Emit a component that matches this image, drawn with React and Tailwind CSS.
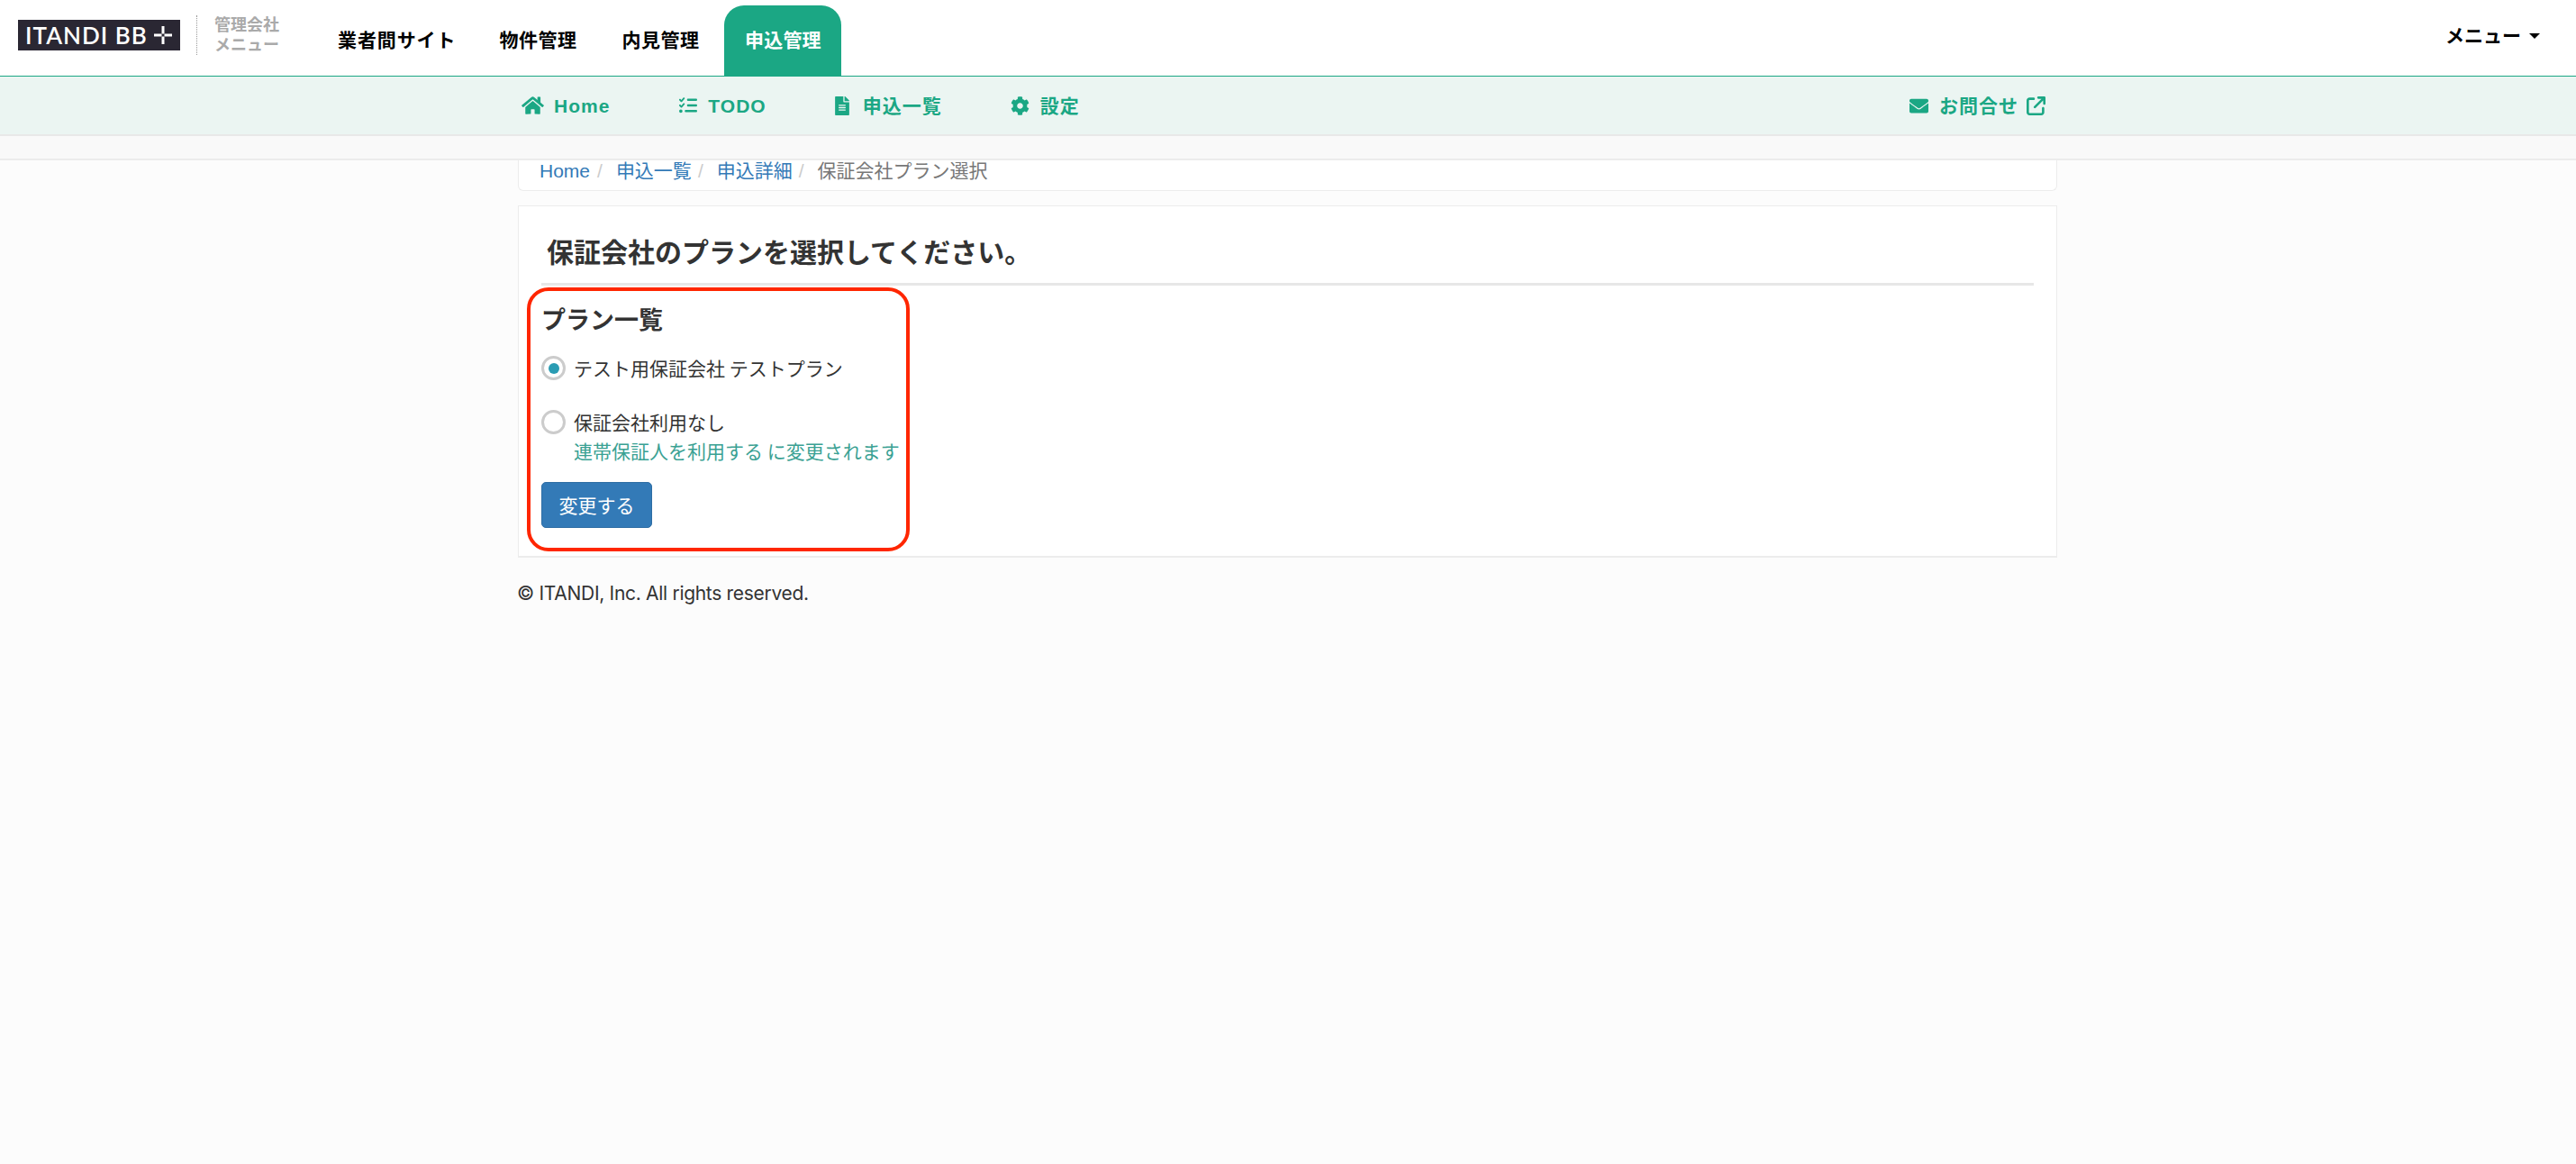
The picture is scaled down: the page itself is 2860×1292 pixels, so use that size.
import React from "react";
import { FaHome, FaFileAlt, FaCog, FaEnvelope } from "react-icons/fa";
import { FaListCheck, FaArrowUpRightFromSquare } from "react-icons/fa6";

const JP = { fontFamily: '"Noto Sans CJK JP", sans-serif' };

function TopLink({ children, className = "" }) {
  return <a className={"font-bold text-[21px] leading-none text-black " + className}>{children}</a>;
}

function SubLink({ icon, children, className = "" }) {
  return (
    <a className={"flex items-center font-bold text-[21px] leading-none text-[#1ba784] tracking-[1px] " + className}>
      {icon}
      {children}
    </a>
  );
}

export default function App() {
  return (
    <div className="min-h-[1292px] bg-[#fcfcfc] font-['Liberation_Sans','Noto_Sans_CJK_JP',sans-serif] text-[#333]">
      <header className="h-[85px] bg-white border-b-[1.5px] border-[#1ba784] flex relative">
        <div className="ml-5 mt-[22px] w-[180px] h-[34px] bg-[#2a2733] flex items-center pl-2 text-white font-['Lato',sans-serif] font-semibold text-[26px] leading-none tracking-[1px] whitespace-nowrap">
          ITANDI BB
          <svg viewBox="0 0 20 20" className="w-5 h-5 ml-[7px]" fill="white">
            <rect x="0" y="8.5" width="8.5" height="3" />
            <rect x="11.5" y="8.5" width="8.5" height="3" />
            <rect x="8.5" y="0" width="3" height="8.5" />
            <rect x="8.5" y="11.5" width="3" height="8.5" />
          </svg>
        </div>
        <div className="ml-[18px] mt-[17px] h-[44px] border-l border-dotted border-[#999]" />
        <div className="ml-[19px] mt-[17px] flex flex-col text-[18px] leading-[22px] font-bold text-[#aaa] whitespace-nowrap">
          <span>管理会社</span>
          <span>メニュー</span>
        </div>
        <nav className="ml-[65px] flex items-start">
          <TopLink className="mt-[34px] tracking-[0.9px]">業者間サイト</TopLink>
          <TopLink className="mt-[34px] ml-[48px] tracking-[0.5px]">物件管理</TopLink>
          <TopLink className="mt-[34px] ml-[50px] tracking-[0.5px]">内見管理</TopLink>
          <a className="ml-[28px] mt-[6px] h-[78px] w-[130px] rounded-t-[22px] bg-[#1ba784] flex justify-center pt-[28px] text-white font-bold text-[21px] leading-none tracking-[0.2px]">
            申込管理
          </a>
        </nav>
        <div className="ml-auto mr-[40px] mt-[29px] flex items-start font-bold text-[21px] leading-none text-black">
          メニュー
          <span className="ml-[9px] mt-[8px] border-x-[6px] border-x-transparent border-t-[6px] border-t-black" />
        </div>
      </header>

      <div className="h-[66px] bg-[#ebf5f2] border-b-2 border-[#e8e8e8]">
        <div className="w-[1709px] ml-[575px] h-full flex items-center pl-[4px]">
          <SubLink icon={<FaHome className="w-[25px] h-[22px] mr-[11px]" />}>Home</SubLink>
          <SubLink className="ml-[76px]" icon={<FaListCheck className="w-[22px] h-[20px] mr-[11px]" />}>TODO</SubLink>
          <SubLink className="ml-[76px] tracking-[0.6px]" icon={<FaFileAlt className="w-[16px] h-[21px] mr-[15px]" />}>申込一覧</SubLink>
          <SubLink className="ml-[76px] tracking-[0.5px]" icon={<FaCog className="w-[21px] h-[21px] mr-[12px]" />}>設定</SubLink>
          <SubLink className="ml-auto mr-[13px]" icon={<FaEnvelope className="w-[21px] h-[21px] mr-[12px]" />}>
            お問合せ
            <FaArrowUpRightFromSquare className="w-[21px] h-[21px] ml-[9px]" />
          </SubLink>
        </div>
      </div>

      <div className="h-[27px] bg-[#f9f9f9] border-b-2 border-[#ececec]" />

      <main className="w-[1709px] ml-[575px]">
        <div className="h-[34px] bg-white border-x border-b border-[#ececec] rounded-b-[6px] flex items-center pl-[23px] pb-[10px] text-[21px] leading-none whitespace-nowrap">
          <a className="text-[#337ab7]">Home</a>
          <span className="text-[#ccc] ml-[8px] mr-[15px]">/</span>
          <a className="text-[#337ab7]">申込一覧</a>
          <span className="text-[#ccc] ml-[7px] mr-[15px]">/</span>
          <a className="text-[#337ab7]">申込詳細</a>
          <span className="text-[#ccc] ml-[7px] mr-[15px]">/</span>
          <span className="text-[#777]">保証会社プラン選択</span>
        </div>

        <section className="mt-4 h-[391px] bg-white border border-[#ececec] border-b-2 pt-[31px] px-[25px]">
          <h1 className="ml-[6px] text-[30px] leading-[36px] font-semibold text-[#333]" style={JP}>保証会社のプランを選択してください。</h1>
          <hr className="mt-[18px] border-0 h-[3px] bg-[#e7e7e7]" />
          <div className="relative mt-[2px] h-[293px] w-[425px] -ml-[16px] border-[4px] border-[#ff2600] rounded-[24px] pl-[12px] pt-[16px] flex flex-col items-start" style={JP}>
            <h2 className="text-[27px] leading-[30px] font-semibold text-[#333]">プラン一覧</h2>
            <label className="mt-[26px] flex items-center text-[21px] leading-[27px] whitespace-nowrap">
              <span className="w-[27px] h-[27px] rounded-full border-[3px] border-[#ccc] bg-white flex items-center justify-center">
                <span className="w-[12px] h-[12px] rounded-full bg-[#2a9cb3]" />
              </span>
              <span className="ml-[9px]">テスト用保証会社 テストプラン</span>
            </label>
            <label className="mt-[33px] flex items-center text-[21px] leading-[27px] whitespace-nowrap">
              <span className="w-[27px] h-[27px] rounded-full border-[3px] border-[#ccc] bg-white" />
              <span className="ml-[9px]">保証会社利用なし</span>
            </label>
            <p className="ml-[36px] mt-[5px] text-[21px] leading-[27px] text-[#3aa193] whitespace-nowrap">連帯保証人を利用する に変更されます</p>
            <button className="mt-[21px] w-[123px] h-[51px] rounded-[5px] bg-[#337ab7] border border-[#2e6da4] text-white text-[21px] leading-none">変更する</button>
          </div>
        </section>

        <footer className="mt-[27px] text-[21px] leading-[26px] text-[#333] font-['Inter',sans-serif] tracking-[-0.3px] -ml-px">© ITANDI, Inc. All rights reserved.</footer>
      </main>
    </div>
  );
}
